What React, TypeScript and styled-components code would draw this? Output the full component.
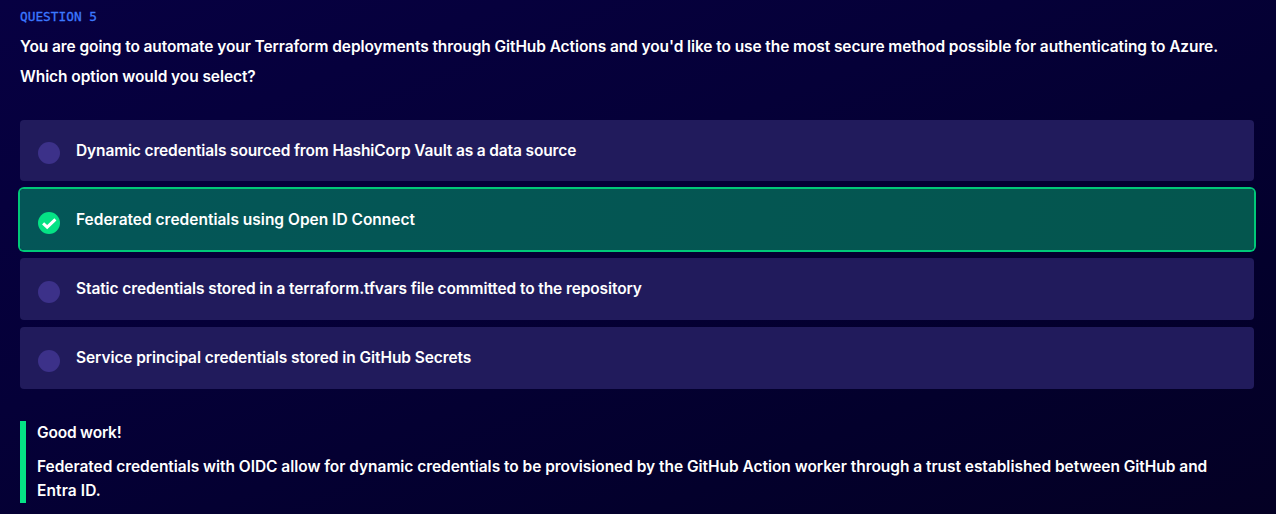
import React from 'react';
import styled, { createGlobalStyle } from 'styled-components';

const GlobalStyle = createGlobalStyle`
  * { box-sizing: border-box; }
  body {
    margin: 0;
    font-family: Inter, 'Liberation Sans', sans-serif;
    font-size: 15.5px;
    font-weight: 600;
    color: #fff;
  }
`;

const Page = styled.main`
  height: 514px;
  overflow: hidden;
  padding: 7px 22px 0 20px;
  background: linear-gradient(158deg, #070042 0%, #050038 40%, #03002c 75%, #040024 100%);
`;

const Label = styled.div`
  height: 20px;
  color: #3c78ff;
  font: 400 12.8px/20px 'DejaVu Sans Mono', monospace;
  -webkit-text-stroke: 0.3px #3c78ff;
`;

const Prompt = styled.h1`
  margin: 5px 0 28.1px;
  font-size: 15.5px;
  font-weight: 600;
  line-height: 30px;
`;

const Line = styled.span<{ $track?: number }>`
  display: block;
  white-space: nowrap;
  letter-spacing: ${(p) => p.$track ?? 0}px;
`;

const Options = styled.div`
  display: grid;
  grid-auto-rows: 61.25px;
  gap: 7.85px;
`;

const Option = styled.div<{ $correct?: boolean }>`
  display: flex;
  gap: 16px;
  padding: 22.35px 18px 0;
  border-radius: 4px;
  background: ${(p) => (p.$correct ? 'linear-gradient(100deg, #045658, #04564e)' : '#211b5c')};
  box-shadow: ${(p) => (p.$correct ? '0 0 0 2px #00c878' : 'none')};
`;

const Marker = styled.span<{ $correct?: boolean }>`
  display: flex;
  width: 22px;
  height: 22px;
  border-radius: 50%;
  background: ${(p) => (p.$correct ? '#05e285' : '#3c3189')};
`;

const OptionText = styled.div`
  height: 18px;
  margin-top: -0.35px;
  line-height: 18px;
`;

const Feedback = styled.section`
  height: 82px;
  margin-top: 32.3px;
  padding-left: 11px;
  border-left: 6px solid #05e285;
  line-height: 24px;
`;

const FeedbackTitle = styled.div`
  margin-bottom: 10px;
`;

const Check = () => (
  <svg width="22" height="22" viewBox="0 0 22 22" fill="none" stroke="#fff" strokeWidth="3">
    <path d="M5.1 11.4 9.2 15.2 17.4 7.4" />
  </svg>
);

const options = [
  { text: 'Dynamic credentials sourced from HashiCorp Vault as a data source', track: -0.14 },
  { text: 'Federated credentials using Open ID Connect', track: 0 },
  { text: 'Static credentials stored in a terraform.tfvars file committed to the repository', track: -0.105 },
  { text: 'Service principal credentials stored in GitHub Secrets', track: -0.08 },
];
const correctIndex = 1;

export default function App() {
  return (
    <>
      <GlobalStyle />
      <Page>
        <Label>QUESTION 5</Label>
        <Prompt>
          <Line $track={-0.09}>You are going to automate your Terraform deployments through GitHub Actions and you'd like to use the most secure method possible for authenticating to Azure.</Line>
          <Line $track={-0.08}>Which option would you select?</Line>
        </Prompt>
        <Options>
          {options.map((o, i) => (
            <Option key={o.text} $correct={i === correctIndex}>
              <Marker $correct={i === correctIndex}>{i === correctIndex && <Check />}</Marker>
              <OptionText>
                <Line $track={o.track}>{o.text}</Line>
              </OptionText>
            </Option>
          ))}
        </Options>
        <Feedback>
          <FeedbackTitle>
            <Line $track={-0.2}>Good work!</Line>
          </FeedbackTitle>
          <Line $track={-0.037}>Federated credentials with OIDC allow for dynamic credentials to be provisioned by the GitHub Action worker through a trust established between GitHub and</Line>
          <Line $track={0.1}>Entra ID.</Line>
        </Feedback>
      </Page>
    </>
  );
}
